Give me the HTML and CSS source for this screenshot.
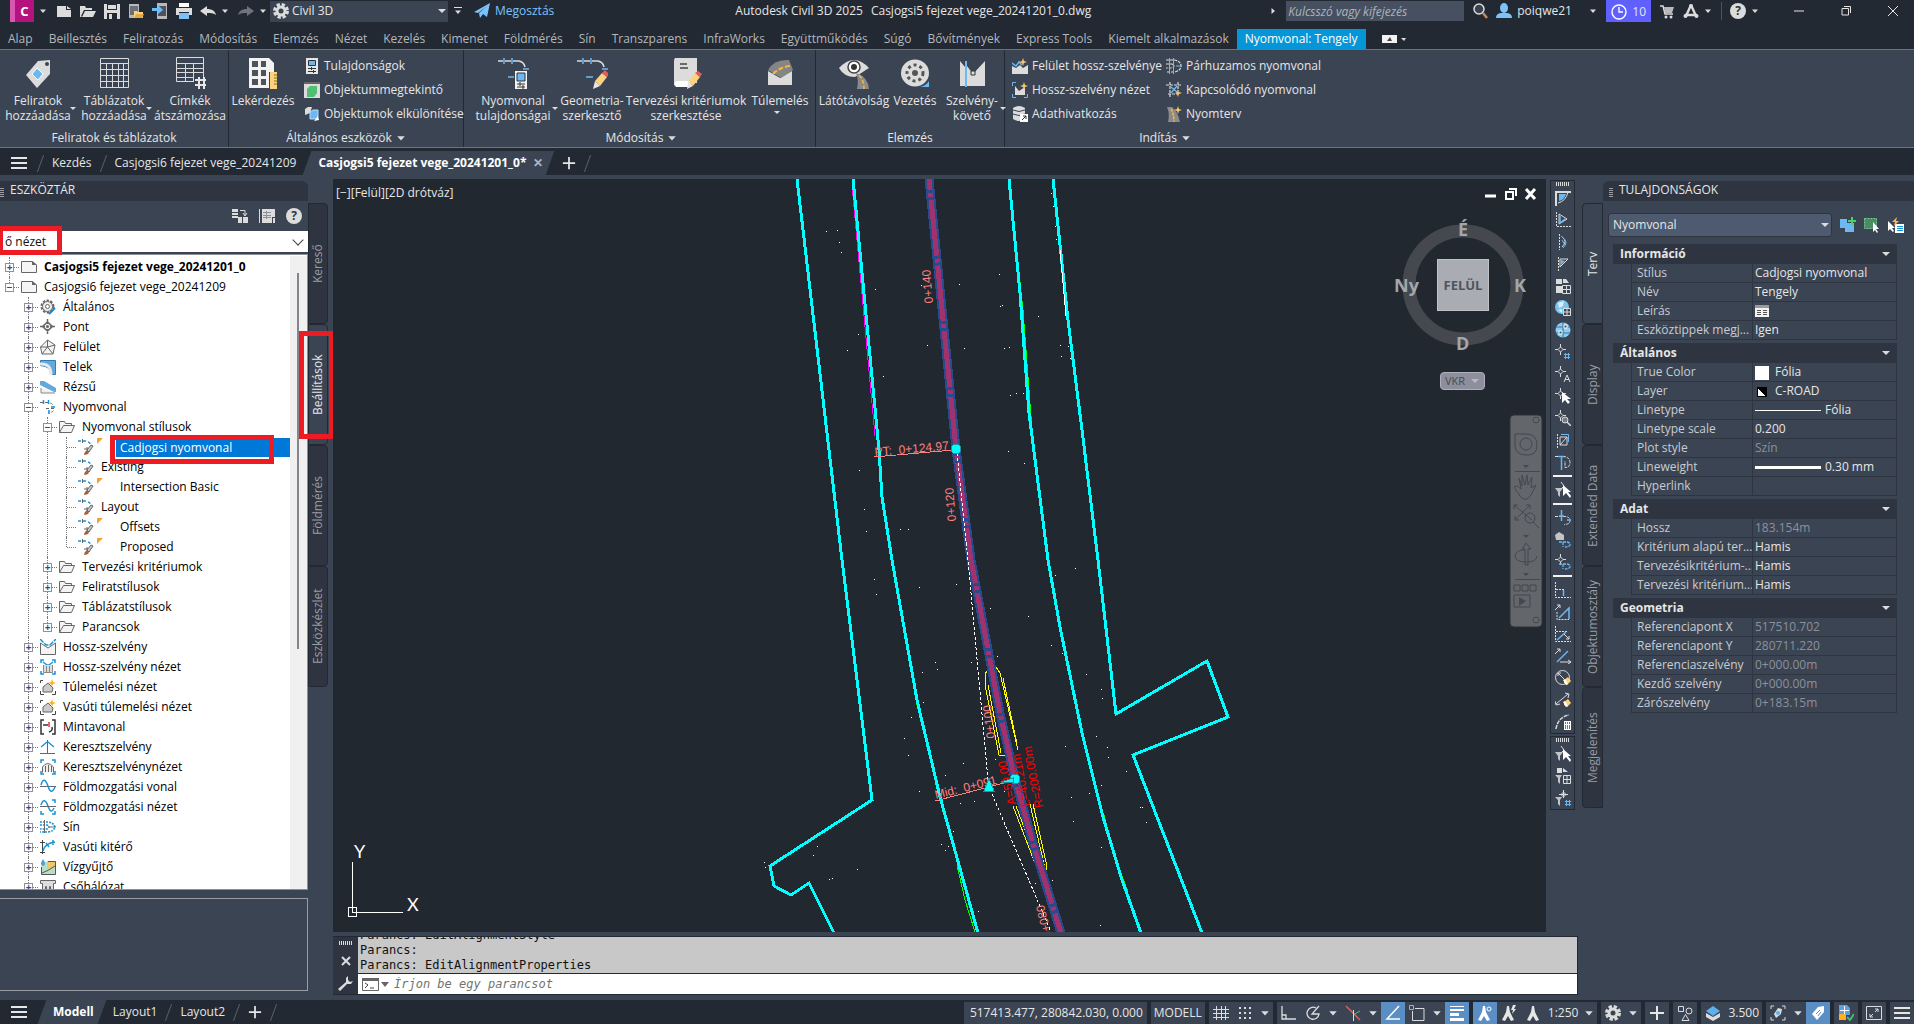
FILE: index.html
```html
<!DOCTYPE html>
<html lang="hu">

<head>
    <meta charset="utf-8">
    <title>Autodesk Civil 3D 2025</title>
    <link rel="stylesheet" href="styles.css">
</head>

<body>
    <!-- icon library -->
    <svg class="lib">
        <symbol id="new" viewBox="0 0 16 16"><path fill="#dcdcdc" d="M1 3h9v4h5v7H1zM11 3l4 3h-4z"/></symbol>
        <symbol id="open" viewBox="0 0 16 16"><path fill="#dcdcdc" d="M0 14V3h5l1 2h6v2H4l-3 6 1 1zM5 8h11l-3 6H2z"/></symbol>
        <symbol id="save" viewBox="0 0 16 16"><path fill="#dcdcdc" d="M0 1h16v15H0z"/><path fill="#222933" d="M3 1h10v6H3zM3 10h10v6H3z"/><path fill="#dcdcdc" d="M4 2h8v4H4zM5 11h3v5H5z"/></symbol>
        <symbol id="openweb" viewBox="0 0 16 16"><path fill="#b9b9b9" d="M1 1h10v14H1z"/><path fill="#6b7078" d="M2 3h8v9H2z"/><path fill="#fcd27e" d="M6 15V8h3l1 1h5v6z"/><path fill="#e3a94b" d="M6 15l2-4h8l-2 4z"/></symbol>
        <symbol id="saveweb" viewBox="0 0 16 16"><path fill="#b9b9b9" d="M5 0h10v16H5z"/><path fill="#4b535f" d="M6 3h8v10H6z"/><path fill="#6cbcf5" d="M0 5h6V2l5 5-5 4V8H0z"/></symbol>
        <symbol id="print" viewBox="0 0 16 16"><path fill="#fff" d="M3 0h10v4H3z"/><path fill="#dcdcdc" d="M0 5h16v7h-3V9H3v3H0z"/><path fill="#7cc0f7" d="M3 10h10v6H3z"/></symbol>
        <symbol id="undo" viewBox="0 0 16 16"><path fill="#dcdcdc" d="M0 8l7-5v3c5 0 8 2 9 6-3-2-5-2-9-2v3z"/></symbol>
        <symbol id="redo" viewBox="0 0 16 16"><path fill="#6f747c" d="M16 8L9 3v3c-5 0-8 2-9 6 3-2 5-2 9-2v3z"/></symbol>
        <symbol id="gear" viewBox="0 0 16 16"><circle cx="8" cy="8" r="6" fill="none" stroke="#dcdcdc" stroke-width="4" stroke-dasharray="3 1.7"/><circle cx="8" cy="8" r="4" fill="none" stroke="#dcdcdc" stroke-width="3"/></symbol>
        <symbol id="plane" viewBox="0 0 16 16"><path fill="#7cc3fa" d="M0 9L16 0l-3 14-4-3-3 4-1-5 8-7-9 7z"/></symbol>
        <symbol id="car" viewBox="0 0 8 8"><path fill="#dcdcdc" d="M1 2.500h6L4 6z"/></symbol>
        <symbol id="find" viewBox="0 0 16 16"><circle cx="7" cy="6" r="5" fill="#39424f" stroke="#dcdcdc" stroke-width="1.500"/><path stroke="#c08a5a" stroke-width="2.500" d="M11 10l4 5"/></symbol>
        <symbol id="user" viewBox="0 0 16 16"><ellipse cx="8" cy="5" rx="4" ry="5" fill="#7cc3fa"/><path fill="#7cc3fa" d="M0 15c0-4 3-5 6-5h4c3 0 6 1 6 5z"/></symbol>
        <symbol id="clock" viewBox="0 0 16 16"><circle cx="8" cy="8" r="7" fill="none" stroke="#fff" stroke-width="1.400"/><path fill="none" stroke="#fff" stroke-width="1.400" d="M8 3v5h4"/></symbol>
        <symbol id="cart" viewBox="0 0 16 16"><path fill="none" stroke="#dcdcdc" stroke-width="1.500" d="M1 3h3l2 8h8"/><path fill="#b9b9b9" d="M5 4h10l-2 6H6z"/><circle cx="7" cy="14" r="1.500" fill="#dcdcdc"/><circle cx="12" cy="14" r="1.500" fill="#dcdcdc"/></symbol>
        <symbol id="adesk" viewBox="0 0 16 16"><path fill="none" stroke="#dcdcdc" stroke-width="2.400" d="M8 2L3 13M8 2l5 11M2 12h12"/><circle cx="8" cy="3" r="2" fill="#dcdcdc"/><circle cx="2.500" cy="13" r="2" fill="#dcdcdc"/><circle cx="13.500" cy="13" r="2" fill="#dcdcdc"/></symbol>
        <symbol id="ham" viewBox="0 0 16 16"><path fill="#e6e6e6" d="M0 2h16v2H0zM0 7h16v2H0zM0 12h16v2H0z"/></symbol>
        <symbol id="plus" viewBox="0 0 16 16"><path fill="#e6e6e6" d="M7 1h2v14H7zM1 7h14v2H1z"/></symbol>
        <!-- ribbon, large -->
        <symbol id="tag" viewBox="0 0 32 32"><path fill="#dcdcdc" d="M16 4l12-1v14L15 31 4 18z"/><circle cx="25" cy="7" r="2" fill="#3b4453"/><path fill="#6cb8f5" stroke="#fff" d="M15 11l6 6-5 6-6-6z"/></symbol>
        <symbol id="grid" viewBox="0 0 32 32"><path fill="none" stroke="#dcdcdc" d="M2.500 1.500h28v29h-28zM2 6.500h28M2 12.500h28M2 18.500h28M2 24.500h28M8.500 7v23M14.500 7v23M20.500 7v23M25.500 7v23"/></symbol>
        <symbol id="renum" viewBox="0 0 32 32"><path fill="none" stroke="#dcdcdc" d="M2.500 20V.500h27V20M2 6.500h27M2 11.500h27M2 15.500h27M2 20.500h18M2.500 20v4.500H20M11.500 7v17M19.500 7v17"/><path fill="none" stroke="#e6e6e6" stroke-width="2" d="M25 20v12M30 20v12M21 23h13M21 28h13"/></symbol>
        <symbol id="query" viewBox="0 0 32 32"><path fill="#f2f2f2" d="M2 1h20l5 5v9h-5v16H2z"/><path fill="#4e535b" d="M5 4h6v6H5zM14 4h5v6h-5zM5 13h6v6H5zM14 13h5v6h-5zM5 22h6v6H5zM14 22h5v6h-5z"/><path fill="#fcd27e" d="M23 15h7v17h-7z"/><path stroke="#8a6a20" d="M27 18h3M27 21h3M27 24h3M27 27h3"/></symbol>
        <symbol id="align" viewBox="0 0 32 32"><path fill="none" stroke="#dcdcdc" stroke-width="1.500" d="M1 4h5M8 4h6M16 4h6q5 1 6 6"/><path stroke="#6cb8f5" stroke-width="1.500" d="M7 1v6M15 1v6M26 12h6M11 20h6"/><path fill="#f2f2f2" d="M18 14h12v18H18z"/><path fill="#6cb8f5" stroke="#333" d="M20 16h8v8h-8z"/><path stroke="#333" d="M20 27h8M20 30h8M23 25v4M26 28v4"/></symbol>
        <symbol id="geom" viewBox="0 0 32 32"><path fill="none" stroke="#dcdcdc" stroke-width="1.500" d="M1 4h5M8 4h6M16 4h6q5 1 6 6"/><path stroke="#6cb8f5" stroke-width="1.500" d="M7 1v6M15 1v6M26 12h6M10 20h7"/><path fill="#fcd27e" d="M19 24l7-8 5 4-7 9z"/><path fill="#e85b5b" d="M26 16l3-3 4 4-2 3z"/><path fill="#e6e6e6" d="M19 24l5 5-7 3z"/></symbol>
        <symbol id="crit" viewBox="0 0 32 32"><path fill="#dcdcdc" d="M5 1h22v25H10q-6 0-6 4V4q0-2 1-3z"/><path fill="#fff" d="M6 24h15v6H6q-3-3 0-6z"/><path stroke="#444" stroke-width="1.500" d="M10 7h7M10 11h8"/><path fill="#fcd27e" d="M18 25l7-9 5 4-7 9z"/><path fill="#e85b5b" d="M25 16l3-2 4 3-2 3z"/><path fill="#e6e6e6" d="M18 25l5 4-6 3z"/></symbol>
        <symbol id="super" viewBox="0 0 32 32"><path fill="#dcdcdc" d="M4 14l12 7 12-7v14H4z"/><path fill="#858585" d="M4 13Q10 2 25 3l4 10-12 8z"/><path fill="none" stroke="#f8b73c" stroke-width="2" stroke-dasharray="5 2" d="M9 17Q17 9 28 9"/></symbol>
        <symbol id="sight" viewBox="0 0 32 32"><path fill="#dcdcdc" d="M1 11Q16-5 31 11L17 20Q6 20 1 11z"/><circle cx="16" cy="10" r="6" fill="#fff" stroke="#444" stroke-width="1.500"/><circle cx="16" cy="10" r="3" fill="#333"/><path fill="#8b8b8b" d="M18 16q12 4 13 16H19q2-9-1-16z"/><path fill="none" stroke="#f8b73c" stroke-width="1.500" stroke-dasharray="4 2" d="M21 18q5 5 5 14"/></symbol>
        <symbol id="drive" viewBox="0 0 32 32"><ellipse cx="16" cy="16" rx="14" ry="13.500" fill="#dcdcdc"/><circle cx="16" cy="16" r="8" fill="none" stroke="#555" stroke-width="3" stroke-dasharray="3 3"/><circle cx="16" cy="16" r="3" fill="#555"/><path fill="#6cb8f5" d="M21 30q6-1 9-6v6z"/></symbol>
        <symbol id="sect" viewBox="0 0 32 32"><path fill="#dcdcdc" d="M4 4l5 6v19H4zM11 9l6 8 12-13v25H11z"/><path stroke="#6cb8f5" stroke-width="2" d="M10 4v26"/><path fill="#dcdcdc" stroke="#333" d="M15 14h4v4h-4z"/></symbol>
        <!-- ribbon, small -->
        <symbol id="props" viewBox="0 0 16 16"><path fill="#e6e6e6" d="M2 0h12v16H2z"/><path fill="#6cb8f5" stroke="#333" d="M4.500 2.500h7v5h-7z"/><path stroke="#333" d="M4 10.500h8M4 13.500h8M7.500 9v3M9.500 12v3"/></symbol>
        <symbol id="viewer" viewBox="0 0 16 16"><path fill="#dcdcdc" d="M0 0h16v16H0z"/><path fill="#666" d="M0 0h16v2H0z"/><path fill="#4fbf72" d="M3 7l3-3h7v7l-3 4H3z"/></symbol>
        <symbol id="isolate" viewBox="0 0 16 16"><path fill="#dcdcdc" d="M1 3l3-2h4L6 7 1 9z"/><path fill="#6cb8f5" stroke="#b8defa" d="M6 6l3-2h5v7l-2 2H6z"/><path fill="#fff" d="M10 15l4-5 1 4z"/></symbol>
        <symbol id="surfp" viewBox="0 0 16 16"><path fill="#dcdcdc" d="M0 8l4 2 4-3 3 3 5-3v9H0z"/><path fill="none" stroke="#6cb8f5" stroke-width="1.500" d="M0 5l4 3 3-4 3 3"/><path fill="#fcc36a" d="M11 0l1 3 3 1-3 1-1 3-1-3-3-1 3-1z"/></symbol>
        <symbol id="profv" viewBox="0 0 16 16"><path fill="none" stroke="#6cb8f5" d="M.500 4V.500H4M.500 12v3.500H4M12 15.500h3.500V12"/><path fill="#dcdcdc" d="M3 4l4 5 6-4v8H3z"/><path fill="#fcc36a" d="M12 0l1 3 3 1-3 1-1 3-1-3-3-1 3-1z"/></symbol>
        <symbol id="data" viewBox="0 0 16 16"><path fill="#dcdcdc" d="M1 2q6-4 12 0v11q-6 4-12 0z"/><path fill="none" stroke="#3b4453" d="M1 4q6 3 12 0M1 8q6 3 12 0"/><path fill="#fff" d="M8 8h8v8H8z"/><path fill="none" stroke="#333" d="M10 14l4-4M11 10h3v3"/></symbol>
        <symbol id="offs" viewBox="0 0 16 16"><path fill="none" stroke="#dcdcdc" stroke-width="1.200" stroke-dasharray="3 1" d="M0 2h8q7 1 7 6t-7 6H0M0 6h6q4 2 0 4H0"/><path stroke="#6cb8f5" d="M3.500 0v16M7.500 0v16M10 8h6"/></symbol>
        <symbol id="conn" viewBox="0 0 16 16"><path fill="none" stroke="#dcdcdc" stroke-width="1.200" stroke-dasharray="3 1" d="M0 3h15M4 0v16M2 12h9M12 0v9"/><path fill="none" stroke="#6cb8f5" stroke-width="1.300" d="M5 5l6 5M11 4l-6 7"/><path fill="#fcc36a" d="M12 8l1 2 3 1-3 1-1 3-1-3-2-1 2-1z"/></symbol>
        <symbol id="corr" viewBox="0 0 16 16"><path fill="#8b8b8b" d="M1 1h5q6 5 8 15H2q2-8-1-15z"/><path fill="none" stroke="#f8b73c" stroke-width="1.500" stroke-dasharray="3 1" d="M5 3q3 5 3 13"/><path fill="#fcc36a" d="M12 0l1 3 3 1-3 1-1 3-1-3-3-1 3-1z"/></symbol>
        <!-- toolspace tree -->
        <symbol id="dwg" viewBox="0 0 16 16"><path fill="#f5f5f5" stroke="#666" d="M.500 2.500h11l4 3.500v7.500H.500z"/><path fill="#666" d="M11 2v4h5z"/></symbol>
        <symbol id="tgear" viewBox="0 0 16 16"><circle cx="7.500" cy="7.500" r="6" fill="none" stroke="#666" stroke-width="2" stroke-dasharray="2.400 1.400"/><circle cx="7.500" cy="7.500" r="5" fill="#eee" stroke="#666"/><circle cx="7.500" cy="7.500" r="2" fill="#fff" stroke="#666"/><path stroke="#0f8fd8" stroke-width="2" d="M9 15l6-6"/></symbol>
        <symbol id="tpt" viewBox="0 0 16 16"><path stroke="#666" stroke-width="1.500" fill="#eee" d="M7.500 3l5 4.500-5 4.500-5-4.500zM7.500 0v5M7.500 10v5M0 7.500h5M10 7.500h5"/><circle cx="7.500" cy="7.500" r="1.500" fill="#666"/></symbol>
        <symbol id="tsurf" viewBox="0 0 16 16"><path fill="#f4f4f4" stroke="#666" d="M7.500 1L15 6l-2 9H2L.500 8zM7.500 1v7L.500 8M7.500 8L15 6M7.500 8l5.500 7M7.500 8L2 15"/></symbol>
        <symbol id="tparc" viewBox="0 0 16 16"><path fill="#63a9dc" stroke="#2e7cb8" d="M.500 1.500h15v14h-5q1-8-10-9z"/><path fill="none" stroke="#e8e8e8" stroke-width="3" d="M0 5q11-1 11 11"/></symbol>
        <symbol id="tgrad" viewBox="0 0 16 16"><path fill="#eee" stroke="#888" d="M1 9v5h14"/><path fill="#63a9dc" d="M0 2h4l12 7v4h-2L0 6z"/></symbol>
        <symbol id="tal" viewBox="0 0 16 16"><path fill="none" stroke="#666" stroke-dasharray="3 2" d="M0 3.500h8q6 1 5 4.500M6 9.500h8q0 4-6 4"/><path stroke="#1793d6" stroke-width="1.500" d="M3.500 1v4M8.500 1v4M11 8h4M9 11v4"/></symbol>
        <symbol id="fold" viewBox="0 0 16 16"><path fill="#f4f4f4" stroke="#666" d="M.500 13.500v-11h5l1 2h6v2M.500 13.500l4-7h11l-3 7z"/></symbol>
        <symbol id="tsty" viewBox="0 0 16 16"><path fill="none" stroke="#1793d6" stroke-width="1.300" stroke-dasharray="3 2" d="M0 2h7q6 1 7 6"/><path stroke="#666" d="M4.500 0v4M6 10h4M9 8v4"/><path fill="#c9c9c9" stroke="#666" d="M9 11l4-5 2 1-4 6z"/><path fill="#a5603a" d="M6 16q1-5 4-4 3 3-4 4z"/></symbol>
        <symbol id="flag" viewBox="0 0 6 6"><path fill="#f5a13a" d="M0 0h6L0 6z"/></symbol>
        <symbol id="tprof" viewBox="0 0 16 16"><path fill="#f4f4f4" stroke="#666" d="M.500 4v11.500h15V4L8 9z"/><path fill="none" stroke="#1793d6" stroke-width="1.500" stroke-dasharray="5 1" d="M0 0l6 6h4l6-6"/></symbol>
        <symbol id="tpv" viewBox="0 0 16 16"><path fill="none" stroke="#1793d6" stroke-width="1.500" d="M1 4V1h3M12 1h3v3M1 12v3h3M12 15h3v-3M3 3l4 3h2l4-3"/><path fill="#ddd" stroke="#888" d="M3.500 6v7.500h9V6M6.500 7v6M9.500 7v6"/></symbol>
        <symbol id="tsup" viewBox="0 0 16 16"><path fill="none" stroke="#444" d="M.500 4V1.500H3M.500 12v3.500H4M12 15.500h3.500V12"/><path fill="#ccc" stroke="#666" d="M3 8l5-4 5 5-1 4H3z"/><path fill="#fdb022" d="M12 0l1 3 3 1-3 1-1 3-1-3-3-1 3-1z"/></symbol>
        <symbol id="tsamp" viewBox="0 0 16 16"><path fill="none" stroke="#333" stroke-width="1.500" d="M4 1H1v14h3M12 1h3v14h-3M3 6h5M9 13q4-1 3-5"/><path stroke="#d33" stroke-width="1.500" d="M9 3v5"/></symbol>
        <symbol id="tsec" viewBox="0 0 16 16"><path fill="none" stroke="#666" d="M7.500 1v14M0 14.500h15"/><path fill="none" stroke="#1793d6" stroke-width="1.300" d="M1 8l6-5M8 3l6 5"/></symbol>
        <symbol id="tsv" viewBox="0 0 16 16"><path fill="none" stroke="#1793d6" stroke-width="1.500" d="M1 4V1h3M12 1h3v3M1 12v3h3M12 15h3v-3"/><path fill="#eee" stroke="#666" d="M2.500 13.500V8q5-7 11 0v5.500M5.500 7v6M8.500 6v7M11.500 7v6"/></symbol>
        <symbol id="tmass" viewBox="0 0 16 16"><path stroke="#666" d="M0 7.500h16"/><path fill="none" stroke="#1793d6" stroke-width="1.500" d="M1 6q3-10 7 1 3 10 7 1"/></symbol>
        <symbol id="tmv" viewBox="0 0 16 16"><path fill="none" stroke="#1793d6" stroke-width="1.500" d="M12 1h3v3M1 12v3h3M12 15h3v-3M1 6q3-9 7 1 3 9 6 2"/><path stroke="#666" d="M0 7.500h16"/></symbol>
        <symbol id="trail" viewBox="0 0 16 16"><path fill="none" stroke="#1793d6" stroke-width="1.500" stroke-dasharray="2 1" d="M0 3h8q6 1 7 5-1 4-7 5H0M0 6h7q4 2 0 4H0"/><path stroke="#666" d="M4.500 1v13M8 8h8"/></symbol>
        <symbol id="tturn" viewBox="0 0 16 16"><path stroke="#444" d="M2.500 1v14M0 3.500h5M0 13.500h5"/><path fill="none" stroke="#1793d6" stroke-width="1.500" d="M3 12q2-8 12-9M6 4l3 4M13 1v5"/></symbol>
        <symbol id="tcatch" viewBox="0 0 16 16"><path fill="#b8dfc4" d="M4 3h12v12H1V8z"/><path fill="#f2c66b" d="M7 2h9v5l-9 4z"/><path fill="#4ba0dc" d="M3 0q4 6 0 7-4-1 0-7z"/><path fill="none" stroke="#555" d="M1.500 8v7.500h14v-13H8M2 14q6-2 13-7"/></symbol>
        <symbol id="tpipe" viewBox="0 0 16 16"><path fill="#ddd" stroke="#666" d="M.500 1.500h15v3h-2v11h-3v-8h-1v8h-3v-8h-1v8h-3v-11h-2z"/></symbol>
        <!-- side toolbar -->
        <symbol id="s1" viewBox="0 0 16 16"><path fill="none" stroke="#dcdcdc" stroke-width="2" d="M1 16V2h15"/><path fill="none" stroke="#dcdcdc" d="M13 2q-2 9-10 11"/><path fill="#6cb8f5" d="M4 4h7q-2 6-7 7z"/></symbol>
        <symbol id="s2" viewBox="0 0 16 16"><path fill="none" stroke="#dcdcdc" stroke-dasharray="2 1" d="M1.500 0v14.500H16"/><path fill="none" stroke="#dcdcdc" d="M4 2l8 5-8 5z"/><path fill="none" stroke="#6cb8f5" stroke-width="1.500" d="M5 4v7l5-4"/></symbol>
        <symbol id="s3" viewBox="0 0 16 16"><path stroke="#dcdcdc" stroke-dasharray="2 1" d="M4.500 0v16"/><path fill="none" stroke="#dcdcdc" d="M7 3q6 4 0 10"/><path fill="none" stroke="#6cb8f5" d="M6 2q9 6 2 12M7 6l3 5"/></symbol>
        <symbol id="s4" viewBox="0 0 16 16"><path stroke="#dcdcdc" stroke-dasharray="2 1" d="M3.500 1v15"/><path fill="none" stroke="#dcdcdc" d="M5 3h8l-8 8z"/><path fill="#6cb8f5" d="M6 4l4 1-4 4z"/></symbol>
        <symbol id="s5" viewBox="0 0 16 16"><path fill="#dcdcdc" d="M1 1h6v5H1zM8 1h3l3 4H8zM1 8h6v7H1z"/><path fill="#3b4453" stroke="#dcdcdc" d="M7.500 7.500h8v8h-8zM11.500 8v7M8 11.500h7"/></symbol>
        <symbol id="s6" viewBox="0 0 16 16"><circle cx="7" cy="7" r="7" fill="#7cc3ee"/><path fill="#d8eefa" d="M3 3l6-2-1 5-4 2zM3 10l4-1v4z"/><path fill="#3b4453" stroke="#dcdcdc" d="M8.500 8.500h7v7h-7zM12 9v6M9 12h6"/></symbol>
        <symbol id="s7" viewBox="0 0 16 16"><circle cx="8" cy="8" r="7.500" fill="#8ecdf2"/><path fill="none" stroke="#35749f" d="M8 0v16M1 5h14M1 11h14"/><path fill="#3b4453" stroke="#fff" d="M9 3h3v3H9zM4 9h3v3H4z"/></symbol>
        <symbol id="cross" viewBox="0 0 16 16"><path fill="none" stroke="#dcdcdc" d="M5.500 0v3M5.500 8v3M0 5.500h3M8 5.500h3M5.500 3L8 5.500 5.500 8 3 5.500z"/></symbol>
        <symbol id="s8" viewBox="0 0 16 16"><use href="#cross"/><path stroke="#6cb8f5" d="M10.500 9v6M13.500 9v6M9 10.500h6M9 13.500h6"/></symbol>
        <symbol id="s9" viewBox="0 0 16 16"><use href="#cross"/><path fill="none" stroke="#dcdcdc" d="M9 16l3-7 3 7M10 13.500h4"/></symbol>
        <symbol id="s10" viewBox="0 0 16 16"><use href="#cross"/><path fill="#fff" d="M7 4v11l3-3 3 4 2-2-3-3h4z"/></symbol>
        <symbol id="s11" viewBox="0 0 16 16"><use href="#cross"/><circle cx="10" cy="10" r="3" fill="#777d87" stroke="#dcdcdc"/><path stroke="#dcdcdc" stroke-width="1.500" d="M12 12l4 4"/></symbol>
        <symbol id="s12" viewBox="0 0 16 16"><path stroke="#dcdcdc" stroke-dasharray="2 1" d="M2.500 2v14"/><path fill="none" stroke="#dcdcdc" d="M5 5h7v8H5zM5 13l7-8"/><path fill="none" stroke="#6cb8f5" d="M6 2.500h7.500V10"/></symbol>
        <symbol id="s13" viewBox="0 0 16 16"><path fill="none" stroke="#dcdcdc" stroke-dasharray="3 1" d="M0 2.500h9q6 1 6 6t-5 5V7"/><path stroke="#6cb8f5" stroke-width="1.500" d="M3 2.500h6M6.500 3v13"/></symbol>
        <symbol id="s14" viewBox="0 0 16 16"><path fill="#c4c4c4" d="M0 6h8l-3 4v5l-2-2v-3z"/><path fill="none" stroke="#dcdcdc" d="M6 0l3 4-3 3"/><path fill="#fff" d="M8 3v11l3-3 4 5 1-2-3-4h3z"/></symbol>
        <symbol id="s15" viewBox="0 0 16 16"><path fill="none" stroke="#dcdcdc" stroke-dasharray="3 1" d="M0 6.500h9q6 0 6 4t-6 4"/><path stroke="#6cb8f5" stroke-width="1.500" d="M6.500 0v11M4 6h5M12 10h4"/></symbol>
        <symbol id="s16" viewBox="0 0 16 16"><path fill="#c4c4c4" d="M4 0l5 3v5H1L0 3z"/><path fill="none" stroke="#6cb8f5" stroke-width="1.300" stroke-dasharray="3 1" d="M4 10h8q4 1 3 3t-5 2M8 10v5"/></symbol>
        <symbol id="s17" viewBox="0 0 16 16"><use href="#cross"/><path fill="none" stroke="#6cb8f5" stroke-width="1.300" stroke-dasharray="3 1" d="M4 10h8q4 1 3 3t-5 2M8 10v5"/></symbol>
        <symbol id="s18" viewBox="0 0 16 16"><path fill="none" stroke="#dcdcdc" stroke-dasharray="2 1" d="M.500 0v15.500H16M1 7.500h8"/><path stroke="#6cb8f5" stroke-width="1.500" d="M8.500 8v6"/></symbol>
        <symbol id="s19" viewBox="0 0 16 16"><path fill="none" stroke="#dcdcdc" d="M0 6l5-5M2 1h3v3"/><path fill="none" stroke="#dcdcdc" stroke-dasharray="2 1" d="M2 8v7.500h12"/><path fill="none" stroke="#6cb8f5" stroke-width="1.500" d="M4 14l10-10v11"/></symbol>
        <symbol id="s20" viewBox="0 0 16 16"><path fill="none" stroke="#dcdcdc" stroke-dasharray="2 1" d="M.500 0v15.500H16M1 5.500h11"/><path stroke="#6cb8f5" stroke-width="1.500" d="M2 14l9-8"/><path fill="none" stroke="#dcdcdc" d="M9 8l5 5M14 10v3h-3"/></symbol>
        <symbol id="s21" viewBox="0 0 16 16"><path fill="none" stroke="#dcdcdc" d="M0 6l5-5M2 1h3v3M5 14h11M13 12l3 2-3 2"/><path stroke="#6cb8f5" stroke-width="1.500" d="M2 14L13 3"/></symbol>
        <symbol id="s22" viewBox="0 0 16 16"><circle cx="7.500" cy="7.500" r="7" fill="none" stroke="#dcdcdc"/><path stroke="#dcdcdc" fill="none" d="M3 3l6 6M3 6V3h3"/><path fill="#fcd27e" d="M9 10l4-3 3 4-4 4-3-2z"/><path fill="#fff" d="M8 10l2-1 3 5-2 1z"/></symbol>
        <symbol id="s23" viewBox="0 0 16 16"><path stroke="#dcdcdc" fill="none" d="M1 12L13 2M10 1l4 1-1 4M0 9l1 4 4-1"/><path fill="#fcd27e" d="M9 10l4-3 3 4-4 4-3-2z"/><path fill="#fff" d="M8 10l2-1 3 5-2 1z"/></symbol>
        <symbol id="s24" viewBox="0 0 16 16"><path fill="none" stroke="#dcdcdc" stroke-width="1.500" stroke-dasharray="4 1" d="M1 15Q3 3 14 1"/><path fill="#fff" d="M9 7h7v9H9z"/><path stroke="#1793d6" stroke-width="2" stroke-dasharray="1 1" d="M10 9h5M10 12h5M10 14h5"/></symbol>
        <symbol id="s25" viewBox="0 0 16 16"><path fill="#c4c4c4" d="M0 7h7l-2 3v6l-2-2v-4z"/><path fill="#dcdcdc" d="M2 0h5v5H2zM8 0l5 4H8z"/><path fill="#3b4453" stroke="#dcdcdc" d="M8.500 7.500h7v8h-7zM12 8v7M9 11.500h6"/></symbol>
        <symbol id="s26" viewBox="0 0 16 16"><path fill="#c4c4c4" d="M0 7h7l-2 3v6l-2-2v-4z"/><path fill="none" stroke="#dcdcdc" d="M8.500 0v8M4 4.500h9M8.500 2L11 4.500 8.500 7 6 4.500z"/><path stroke="#6cb8f5" d="M11.500 10v6M14.500 10v6M10 11.500h6M10 14.500h6"/></symbol>
        <!-- status bar -->
        <symbol id="b-grid" viewBox="0 0 16 16"><path stroke="#dcdcdc" d="M3.500 1v14M8.500 1v14M12.500 1v14M0 4.500h16M0 8.500h16M0 12.500h16"/></symbol>
        <symbol id="b-snap" viewBox="0 0 16 16"><path stroke="#dcdcdc" stroke-width="2" stroke-dasharray="2 3" d="M2 3h13M2 8h13M2 13h13"/></symbol>
        <symbol id="b-ortho" viewBox="0 0 16 16"><path fill="none" stroke="#dcdcdc" stroke-width="1.300" d="M1 1v13h14M1 10h4v4"/></symbol>
        <symbol id="b-polar" viewBox="0 0 16 16"><path fill="none" stroke="#dcdcdc" stroke-width="1.300" d="M11 3a6 6 0 1 0 3 6H7l7-8"/></symbol>
        <symbol id="b-iso" viewBox="0 0 16 16"><path stroke="#e05a5a" stroke-width="1.500" d="M1 1l14 14"/><path stroke="#5cb878" d="M15 6L8 10"/><path stroke="#dcdcdc" d="M8.500 5v11"/></symbol>
        <symbol id="b-track" viewBox="0 0 16 16"><path fill="none" stroke="#fff" stroke-width="1.500" d="M14 1L2 14h13"/></symbol>
        <symbol id="b-osnap" viewBox="0 0 16 16"><path fill="none" stroke="#dcdcdc" d="M6 3.500h9v12H3.500V6"/><path fill="none" stroke="#f0a04b" d="M.500.500h4v4h-4z"/></symbol>
        <symbol id="b-lw" viewBox="0 0 16 16"><path fill="#fff" d="M1 1h14v1H1zM1 4h14v2H1zM1 8h9v3H1zM1 13h14v3H1z"/></symbol>
        <symbol id="b-ann" viewBox="0 0 16 16"><path fill="#e6e6e6" d="M7 1h2l1 6 4 8-3 1-3-5-3 5-3-1 4-8z"/></symbol>
        <symbol id="b-ann2" viewBox="0 0 16 16"><path fill="#fff" d="M6 1h2l1 6 4 8-3 1-3-5-3 5-3-1 4-8z"/><circle cx="12" cy="4" r="2" fill="none" stroke="#fff"/></symbol>
        <symbol id="b-ann3" viewBox="0 0 16 16"><path fill="#e6e6e6" d="M6 1h2l1 6 4 8-3 1-3-5-3 5-3-1 4-8z"/><path fill="#e6e6e6" d="M12 0l-2 5h2l-1 4 4-5h-2l2-4z"/></symbol>
        <symbol id="b-shape" viewBox="0 0 16 16"><path fill="none" stroke="#dcdcdc" d="M1.500 1.500h5v5h-5zM5 15.500l3.500-6 3.500 6z"/><circle cx="12" cy="6" r="3" fill="none" stroke="#dcdcdc"/></symbol>
        <symbol id="b-layer" viewBox="0 0 16 16"><path fill="#dcdcdc" d="M1 8l7 4 7-4v4l-7 4-7-4z"/><path fill="#5cb0ee" d="M1 6l7-5 7 5-7 5z"/></symbol>
        <symbol id="b-sel" viewBox="0 0 16 16"><path fill="none" stroke="#dcdcdc" d="M1 4V1h3M12 1h3v3M1 12v3h3M12 15h3v-3"/><path fill="#dcdcdc" d="M4 9l4-6 4 1-1 5-5 4z"/><circle cx="8" cy="8" r="2" fill="#5cb0ee"/></symbol>
        <symbol id="b-tag" viewBox="0 0 16 16"><path fill="#fff" d="M2 9l6-7 6-1v6l-7 8z"/><path stroke="#5b8ec4" d="M6 9l4-4M8 11l3-4"/></symbol>
        <symbol id="b-iso2" viewBox="0 0 16 16"><path fill="#5b9fe0" d="M1 0h8l3 3v7H1z"/><path stroke="#fff" d="M6.500 1v9M2 5.500h9"/><path fill="#fdb022" d="M1 9h7v6H1z"/><path fill="none" stroke="#3fbf6a" stroke-width="2" d="M9 12l3 3 4-6"/></symbol>
        <symbol id="b-full" viewBox="0 0 16 16"><path fill="none" stroke="#dcdcdc" d="M.500 1.500h15v13H.500zM9 7l3-3M9 4h3v3M7 9l-3 3M4 9v3h3"/></symbol>
        <symbol id="wrench" viewBox="0 0 16 16"><path fill="#dcdcdc" d="M10 5V1L8 3v4L0 14l2 2 7-7h4l2-3-3 1z"/></symbol>
    </svg>

    <header class="titlebar">
        <div class="quick">
            <button class="logo" aria-label="Civil 3D">C</button>
            <svg class="car"><use href="#car"/></svg>
            <button aria-label="Új"><svg><use href="#new"/></svg></button>
            <button aria-label="Megnyitás"><svg><use href="#open"/></svg></button>
            <button aria-label="Mentés"><svg><use href="#save"/></svg></button>
            <button aria-label="Megnyitás webről"><svg><use href="#openweb"/></svg></button>
            <button aria-label="Mentés webre"><svg><use href="#saveweb"/></svg></button>
            <button aria-label="Nyomtatás"><svg><use href="#print"/></svg></button>
            <button aria-label="Vissza"><svg><use href="#undo"/></svg></button>
            <svg class="car"><use href="#car"/></svg>
            <button aria-label="Újra"><svg><use href="#redo"/></svg></button>
            <svg class="car"><use href="#car"/></svg>
            <label class="workspace"><svg><use href="#gear"/></svg>
                <select aria-label="Munkaterület"><option>Civil 3D</option></select>
            </label>
            <button class="more" aria-label="Több"><svg class="car"><use href="#car"/></svg></button>
            <button class="share"><svg><use href="#plane"/></svg>Megosztás</button>
        </div>
        <div class="doctitle"><span>Autodesk Civil 3D 2025</span><span>Casjogsi5 fejezet vege_20241201_0.dwg</span></div>
        <div class="account">
            <svg class="car side"><use href="#car"/></svg>
            <input type="text" placeholder="Kulcsszó vagy kifejezés" aria-label="Keresés">
            <button aria-label="Keresés"><svg><use href="#find"/></svg></button>
            <button class="user"><svg><use href="#user"/></svg>poiqwe21</button>
            <svg class="car"><use href="#car"/></svg>
            <button class="trial"><svg><use href="#clock"/></svg>10</button>
            <button aria-label="Bolt"><svg><use href="#cart"/></svg></button>
            <button aria-label="Autodesk"><svg><use href="#adesk"/></svg></button>
            <svg class="car"><use href="#car"/></svg>
            <i class="sep"></i>
            <button class="help">?</button>
            <svg class="car"><use href="#car"/></svg>
        </div>
        <div class="window">
            <button aria-label="Kis méret"><svg viewBox="0 0 10 10"><path d="M0 5h10"/></svg></button>
            <button aria-label="Visszaállítás"><svg viewBox="0 0 10 10"><path d="M1 2.500h6.500V9H1zM3 .500h6.500V7"/></svg></button>
            <button aria-label="Bezárás"><svg viewBox="0 0 10 10"><path d="M0 0l10 10M10 0L0 10"/></svg></button>
        </div>
    </header>

    <nav class="tabs">
        <a href="#">Alap</a>
        <a href="#">Beillesztés</a>
        <a href="#">Feliratozás</a>
        <a href="#">Módosítás</a>
        <a href="#">Elemzés</a>
        <a href="#">Nézet</a>
        <a href="#">Kezelés</a>
        <a href="#">Kimenet</a>
        <a href="#">Földmérés</a>
        <a href="#">Sín</a>
        <a href="#">Transzparens</a>
        <a href="#">InfraWorks</a>
        <a href="#">Együttműködés</a>
        <a href="#">Súgó</a>
        <a href="#">Bővítmények</a>
        <a href="#">Express Tools</a>
        <a href="#">Kiemelt alkalmazások</a>
        <a href="#" class="on">Nyomvonal: Tengely</a>
        <button class="collapse" aria-label="Szalag összecsukása"><svg viewBox="0 0 28 10"><path fill="#f2f2f2" d="M0 1h15v8H0z"/><path fill="#444" d="M5 7l3-4 2 4z"/><path fill="#dcdcdc" d="M19 4h5l-2 3z"/></svg></button>
    </nav>

    <section class="ribbon">
        <div class="rpanel p1">
            <div class="tools">
                <button class="big w76 drop"><svg><use href="#tag"/></svg>Feliratok<br>hozzáadása</button>
                <button class="big w76 drop"><svg><use href="#grid"/></svg>Táblázatok<br>hozzáadása</button>
                <button class="big w76"><svg><use href="#renum"/></svg>Címkék<br>átszámozása</button>
            </div>
            <h3>Feliratok és táblázatok</h3>
        </div>
        <div class="rpanel p2">
            <div class="tools">
                <button class="big w68"><svg><use href="#query"/></svg>Lekérdezés</button>
                <div class="stack">
                    <button><svg><use href="#props"/></svg>Tulajdonságok</button>
                    <button><svg><use href="#viewer"/></svg>Objektummegtekintő</button>
                    <button><svg><use href="#isolate"/></svg>Objektumok elkülönítése</button>
                </div>
            </div>
            <h3>Általános eszközök <svg><use href="#car"/></svg></h3>
        </div>
        <div class="rpanel p3">
            <div class="tools">
                <button class="big w90 drop"><svg><use href="#align"/></svg>Nyomvonal<br>tulajdonságai</button>
                <button class="big w68"><svg><use href="#geom"/></svg>Geometria-<br>szerkesztő</button>
                <button class="big w120"><svg><use href="#crit"/></svg>Tervezési kritériumok<br>szerkesztése</button>
                <button class="big w68 below"><svg><use href="#super"/></svg>Túlemelés</button>
            </div>
            <h3>Módosítás <svg><use href="#car"/></svg></h3>
        </div>
        <div class="rpanel p4">
            <div class="tools">
                <button class="big w76"><svg><use href="#sight"/></svg>Látótávolság</button>
                <button class="big w46"><svg><use href="#drive"/></svg>Vezetés</button>
                <button class="big w68 drop"><svg><use href="#sect"/></svg>Szelvény-<br>követő</button>
            </div>
            <h3>Elemzés</h3>
        </div>
        <div class="rpanel p5">
            <div class="tools">
                <div class="stack">
                    <button><svg><use href="#surfp"/></svg>Felület hossz-szelvénye</button>
                    <button><svg><use href="#profv"/></svg>Hossz-szelvény nézet</button>
                    <button><svg><use href="#data"/></svg>Adathivatkozás</button>
                </div>
                <div class="stack">
                    <button><svg><use href="#offs"/></svg>Párhuzamos nyomvonal</button>
                    <button><svg><use href="#conn"/></svg>Kapcsolódó nyomvonal</button>
                    <button><svg><use href="#corr"/></svg>Nyomterv</button>
                </div>
            </div>
            <h3>Indítás <svg><use href="#car"/></svg></h3>
        </div>
    </section>

    <nav class="docs">
        <button aria-label="Menü"><svg><use href="#ham"/></svg></button>
        <i class="slash"></i>
        <a href="#">Kezdés</a>
        <i class="slash"></i>
        <a href="#">Casjogsi6 fejezet vege_20241209</a>
        <a href="#" class="on">Casjogsi5 fejezet vege_20241201_0* <span>✕</span></a>
        <button aria-label="Új lap"><svg class="add"><use href="#plus"/></svg></button>
        <i class="slash"></i>
    </nav>

    <main>
        <aside class="toolspace">
            <div class="panel">
                <h2>ESZKÖZTÁR</h2>
                <div class="ptools">
                    <button aria-label="Elemfa"><svg viewBox="0 0 16 16"><path fill="#dcdcdc" d="M0 1h6v3H0zM0 5h6v2H0zM0 8h6v2H0zM6 9h4v6H6zM11 9h5v6h-5z"/><path fill="none" stroke="#dcdcdc" d="M8 2.500h5v5M11 5l2 3 2-3"/></svg></button>
                    <button aria-label="Panoráma"><svg viewBox="0 0 16 16"><path fill="#dcdcdc" d="M0 1h1v14H0zM3 1h13v8h-3v6H3zM14 10h2v5h-2z"/><path stroke="#8a8f98" d="M4 4.500h8M4 7.500h8M4 9.500h8M7.500 3v8"/></svg></button>
                    <button class="help">?</button>
                </div>
                <div class="view">
                    <select aria-label="Nézet"><option>ő nézet</option></select>
                    <i class="mark"></i>
                </div>
                <div class="tree">
                    <ul>
                        <li><div class="row"><button>+</button><svg><use href="#dwg"/></svg><b>Casjogsi5 fejezet vege_20241201_0</b></div></li>
                        <li><div class="row"><button>−</button><svg><use href="#dwg"/></svg><span>Casjogsi6 fejezet vege_20241209</span></div>
                            <ul>
                                <li><div class="row"><button>+</button><svg><use href="#tgear"/></svg><span>Általános</span></div></li>
                                <li><div class="row"><button>+</button><svg><use href="#tpt"/></svg><span>Pont</span></div></li>
                                <li><div class="row"><button>+</button><svg><use href="#tsurf"/></svg><span>Felület</span></div></li>
                                <li><div class="row"><button>+</button><svg><use href="#tparc"/></svg><span>Telek</span></div></li>
                                <li><div class="row"><button>+</button><svg><use href="#tgrad"/></svg><span>Rézsű</span></div></li>
                                <li><div class="row"><button>−</button><svg><use href="#tal"/></svg><span>Nyomvonal</span></div>
                                    <ul>
                                        <li><div class="row"><button>−</button><svg><use href="#fold"/></svg><span>Nyomvonal stílusok</span></div>
                                            <ul>
                                                <li><div class="row leaf child"><svg><use href="#tsty"/></svg><svg class="flag"><use href="#flag"/></svg><span class="sel">Cadjogsi nyomvonal</span><i class="mark"></i></div></li>
                                                <li><div class="row leaf"><svg><use href="#tsty"/></svg><span>Existing</span></div></li>
                                                <li><div class="row leaf child"><svg><use href="#tsty"/></svg><svg class="flag"><use href="#flag"/></svg><span>Intersection Basic</span></div></li>
                                                <li><div class="row leaf"><svg><use href="#tsty"/></svg><span>Layout</span></div></li>
                                                <li><div class="row leaf child"><svg><use href="#tsty"/></svg><svg class="flag"><use href="#flag"/></svg><span>Offsets</span></div></li>
                                                <li><div class="row leaf child"><svg><use href="#tsty"/></svg><svg class="flag"><use href="#flag"/></svg><span>Proposed</span></div></li>
                                            </ul>
                                        </li>
                                        <li><div class="row"><button>+</button><svg><use href="#fold"/></svg><span>Tervezési kritériumok</span></div></li>
                                        <li><div class="row"><button>+</button><svg><use href="#fold"/></svg><span>Feliratstílusok</span></div></li>
                                        <li><div class="row"><button>+</button><svg><use href="#fold"/></svg><span>Táblázatstílusok</span></div></li>
                                        <li><div class="row"><button>+</button><svg><use href="#fold"/></svg><span>Parancsok</span></div></li>
                                    </ul>
                                </li>
                                <li><div class="row"><button>+</button><svg><use href="#tprof"/></svg><span>Hossz-szelvény</span></div></li>
                                <li><div class="row"><button>+</button><svg><use href="#tpv"/></svg><span>Hossz-szelvény nézet</span></div></li>
                                <li><div class="row"><button>+</button><svg><use href="#tsup"/></svg><span>Túlemelési nézet</span></div></li>
                                <li><div class="row"><button>+</button><svg><use href="#tsup"/></svg><span>Vasúti túlemelési nézet</span></div></li>
                                <li><div class="row"><button>+</button><svg><use href="#tsamp"/></svg><span>Mintavonal</span></div></li>
                                <li><div class="row"><button>+</button><svg><use href="#tsec"/></svg><span>Keresztszelvény</span></div></li>
                                <li><div class="row"><button>+</button><svg><use href="#tsv"/></svg><span>Keresztszelvénynézet</span></div></li>
                                <li><div class="row"><button>+</button><svg><use href="#tmass"/></svg><span>Földmozgatási vonal</span></div></li>
                                <li><div class="row"><button>+</button><svg><use href="#tmv"/></svg><span>Földmozgatási nézet</span></div></li>
                                <li><div class="row"><button>+</button><svg><use href="#trail"/></svg><span>Sín</span></div></li>
                                <li><div class="row"><button>+</button><svg><use href="#tturn"/></svg><span>Vasúti kitérő</span></div></li>
                                <li><div class="row"><button>+</button><svg><use href="#tcatch"/></svg><span>Vízgyűjtő</span></div></li>
                                <li><div class="row"><button>+</button><svg><use href="#tpipe"/></svg><span>Csőhálózat</span></div></li>
                            </ul>
                        </li>
                    </ul>
                    <div class="scroll"><i></i></div>
                </div>
                <div class="desc"></div>
            </div>
            <div class="vtabs">
                <button>Kereső</button>
                <button class="on">Beállítások<i class="mark"></i></button>
                <button>Földmérés</button>
                <button>Eszközkészlet</button>
            </div>
        </aside>

        <section class="center">
            <div class="work">
                <div class="canvas">
                    <svg class="drawing" viewBox="333 179 1213 753" preserveAspectRatio="xMidYMid slice">
                        <path class="dots" d="M826 231h1M837 230h1M839 242h1M841 252h1M875 289h1M858 334h1M847 350h1M883 376h1M859 470h1M864 509h1M866 531h1M900 529h1M908 529h1M959 284h1M921 285h1M999 274h1M1000 306h1M1002 305h1M1038 316h1M927 345h1M964 348h1M1004 348h1M1009 347h1M1060 345h1M1068 346h1M1061 356h1M1070 358h1M1010 395h1M1016 393h1M1023 393h1M1008 451h1M1024 463h1M1051 193h1M1053 206h1M1055 226h1M1056 239h1M874 579h1M876 594h1M919 587h1M956 584h1M990 608h1M1028 616h1M1075 568h1M1055 575h1M1051 645h1M997 656h1M935 662h1M937 669h1M971 662h1M922 672h1M923 702h1M911 717h1M904 738h1M908 755h1M963 763h1M945 775h1M919 791h1M1086 674h1M1101 689h1M1102 698h1M1096 736h1M1065 746h1M1107 747h1M1108 757h1M1126 771h1M1101 785h1M1089 793h1M1071 797h1M1140 807h1M1142 807h1M1146 822h1M1073 821h1M1101 847h1M960 803h1M974 801h1M953 831h1M941 844h1M948 846h1M945 850h1M1052 880h1M1035 883h1M978 911h1M1100 925h1M817 846h1M813 855h1M764 862h1M765 867h1M857 869h1M829 879h1M832 878h1M1004 791h1M995 759h1M1062 653h1"/>
                        <g class="mag"><path d="M852 185L875 436"/><path d="M1022 315L1034 450M1058 620L1082 735"/></g>
                        <g class="green"><path d="M1020 282L1023 310 1032 430 1040 495 1046 537M916 700l5 22M932 765l5 20M957 865l8 35 10 32M1104 815l8 35 16 42"/></g>
                        <g class="cyan">
                            <path d="M797 179L842 560 872 800 770 866 774 886 791 895 809 883 834 933"/>
                            <path d="M853 179L879 450 882 497 892 560 917 700 940 797 978 933"/>
                            <path d="M1009 179L1020 293 1029 413 1048 560 1060 627 1082 733 1103 817 1122 880 1141 933"/>
                            <path d="M1053 179L1068 320 1082 430 1098 560 1116 714 1207 661 1228 717 1133 755 1202 933"/>
                        </g>
                        <path class="wht" d="M1060 250l6 66"/>
                        <g class="yellow"><path d="M985 685V674l3-4 8-3 4 6 18 77M985 685l14 70h6M988 685l13 68M1003 678l14 66"/><path d="M1013 806l25 65M1016 806l25 66M1030 804l14 60 2 8M1033 804l13 58v8l-3 3"/></g>
                        <path class="road" d="M929 179L956 449 971 560 1000 713 1015 779 1033 843 1061 933"/>
                        <path class="axis" d="M929 179L956 449 971 560 1000 713 1015 779 1033 843 1061 933"/>
                        <path class="tang" d="M957 453L968 560 988 780M992 794L1051 932"/>
                        <g class="pink">
                            <path d="M874 457L953 450M935 801L1004 783"/>
                            <text transform="translate(933 303) rotate(-95)">0+140</text>
                            <text transform="translate(956 521) rotate(-95)">0+120</text>
                            <text transform="translate(995 738) rotate(-97)">0+100</text>
                            <text transform="translate(1052 937) rotate(-104)">0+080</text>
                            <text transform="translate(875 456) rotate(-5)">PT:&#160; 0+124.97</text>
                            <text transform="translate(936 799) rotate(-14)">Mid:&#160; 0+091</text>
                        </g>
                        <g class="red">
                            <text transform="translate(1016 804) rotate(-103)">A=50.00</text>
                            <text transform="translate(1030 806) rotate(-101)">L=40.21m</text>
                            <text transform="translate(1043 807) rotate(-101)">R=200.00m</text>
                        </g>
                        <g class="grip"><circle cx="956" cy="449" r="5"/><circle cx="1015" cy="779" r="5"/><path d="M989 778l5 13h-10zM1001 782l12-4v5z"/></g>
                        <g class="ucs"><path d="M348.500 907.500h8v9h-8zM352.500 862v50H403"/><text x="354" y="858">Y</text><text x="407" y="911">X</text></g>
                    </svg>
                    <div class="vlabel">[−][Felül][2D drótváz]</div>
                    <div class="mdi">
                        <svg viewBox="0 0 54 12"><path stroke-width="3" d="M0 8h11"/><path stroke-width="2" d="M21 4h7v7h-7zM24 1h7v7"/><path stroke-width="3" d="M41 1l9 10M50 1l-9 10"/></svg>
                    </div>
                    <div class="cube">
                        <svg viewBox="0 0 122 122"><circle cx="61" cy="61" r="54"/></svg>
                        <b class="n">É</b><b class="w">Ny</b><b class="e">K</b><b class="s">D</b>
                        <button>FELÜL</button>
                    </div>
                    <button class="vkr">VKR <svg viewBox="0 0 8 6"><path d="M0 1h8L4 5z"/></svg></button>
                    <svg class="navbar" viewBox="0 0 34 214">
                        <rect x="1" y="1" width="32" height="212" rx="4"/>
                        <path d="M6 57.500h25M6 165.500h25"/>
                        <circle cx="27" cy="6" r="3"/><circle cx="27" cy="206" r="3"/>
                        <path d="M6 20h11q11 0 11 11t-11 10Q6 41 6 31z"/><circle cx="17" cy="30" r="6"/>
                        <path d="M10 80q-8-9-2-8l4 3-2-11 3 8V61l3 10 2-10 1 10 4-8-1 11 5-3-5 10q-6 9-12 0z"/>
                        <path d="M5 91l18 15M21 91L6 106M5 95v-4h4M17 91h4v4M6 102v4h4"/><circle cx="21" cy="104" r="5"/><path d="M24 108l6 6"/>
                        <path d="M17 129l-4 6h3v16h3v-16h3zM28 142q0 6-11 6T6 141q2-5 10-5"/>
                        <path d="M5 171h6v6H5zM13 171h6v6h-6zM21 171h6v6h-6zM5 181h16v12H5z"/><path class="f" d="M10 183l7 4-7 5zM14 51h6l-3 3zM14 121h6l-3 3zM14 159h6l-3 3z"/>
                    </svg>
                </div>
                <div class="strips">
                    <div class="strip">
                        <i class="grab"></i>
                        <button aria-label="Transzparens 1"><svg><use href="#s1"/></svg></button>
                        <button aria-label="Transzparens 2"><svg><use href="#s2"/></svg></button>
                        <button aria-label="Transzparens 3"><svg><use href="#s3"/></svg></button>
                        <button aria-label="Transzparens 4"><svg><use href="#s4"/></svg></button>
                        <button aria-label="Transzparens 5"><svg><use href="#s5"/></svg></button>
                        <button aria-label="Transzparens 6"><svg><use href="#s6"/></svg></button>
                        <button aria-label="Transzparens 7"><svg><use href="#s7"/></svg></button>
                        <button aria-label="Pont száma"><svg><use href="#s8"/></svg></button>
                        <button aria-label="Pont neve"><svg><use href="#s9"/></svg></button>
                        <button aria-label="Pont kijelölése"><svg><use href="#s10"/></svg></button>
                        <button aria-label="Pont keresése"><svg><use href="#s11"/></svg></button>
                        <button aria-label="Oldallövés"><svg><use href="#s12"/></svg></button>
                        <button aria-label="Szelvény eltolás"><svg><use href="#s13"/></svg></button>
                        <hr>
                        <button aria-label="Szűrő"><svg><use href="#s14"/></svg></button>
                        <hr>
                        <button aria-label="Profil állomás"><svg><use href="#s15"/></svg></button>
                        <button aria-label="Profil felület"><svg><use href="#s16"/></svg></button>
                        <button aria-label="Profil pont"><svg><use href="#s17"/></svg></button>
                        <hr>
                        <button aria-label="Lejtés 1"><svg><use href="#s18"/></svg></button>
                        <button aria-label="Lejtés 2"><svg><use href="#s19"/></svg></button>
                        <button aria-label="Lejtés 3"><svg><use href="#s20"/></svg></button>
                        <button aria-label="Lejtés 4"><svg><use href="#s21"/></svg></button>
                        <button aria-label="Sugár"><svg><use href="#s22"/></svg></button>
                        <button aria-label="Hossz"><svg><use href="#s23"/></svg></button>
                        <button aria-label="Ív számítás"><svg><use href="#s24"/></svg></button>
                    </div>
                    <div class="strip">
                        <i class="grab"></i>
                        <button aria-label="Szűrő kijelölés"><svg><use href="#s14"/></svg></button>
                        <button aria-label="Szűrő rajz"><svg><use href="#s25"/></svg></button>
                        <button aria-label="Szűrő szám"><svg><use href="#s26"/></svg></button>
                    </div>
                </div>
            </div>
            <div class="cmd">
                <div class="cmdside">
                    <i class="grab"></i>
                    <button aria-label="Bezárás"><svg viewBox="0 0 16 16"><path stroke="#dcdcdc" stroke-width="2" d="M4 4l8 8M12 4l-8 8"/></svg></button>
                    <button aria-label="Testreszabás"><svg><use href="#wrench"/></svg></button>
                </div>
                <div class="cmdmain">
                    <div class="log"><p>Parancs: EditAlignmentStyle</p><p>Parancs:</p><p>Parancs: EditAlignmentProperties</p></div>
                    <label class="prompt"><svg viewBox="0 0 28 16"><path fill="#fff" stroke="#666" d="M.500 2.500h16v12H.500z"/><path fill="#666" d="M0 2h17v3H0z"/><path fill="none" stroke="#444" d="M3 7l3 2-3 3M8 12h4"/><path fill="#666" d="M19 6h8l-4 5z"/></svg>
                        <input type="text" placeholder="Írjon be egy parancsot" aria-label="Parancs">
                    </label>
                </div>
            </div>
        </section>

        <aside class="props">
            <div class="vtabs">
                <button class="on">Terv</button>
                <button>Display</button>
                <button>Extended Data</button>
                <button>Objektumosztály</button>
                <button>Megjelenítés</button>
            </div>
            <div class="panel">
                <h2>TULAJDONSÁGOK</h2>
                <div class="picker">
                    <label class="combo"><select aria-label="Objektumtípus"><option>Nyomvonal</option></select></label>
                    <button aria-label="Hozzáadás"><svg viewBox="0 0 16 16"><path fill="#6cb8f5" d="M0 2h7v9H0zM5 6h9v9H5z"/><path stroke="#4fcf6a" stroke-width="2" d="M12 0v8M8 4h8"/></svg></button>
                    <button aria-label="Kijelölés"><svg viewBox="0 0 16 16"><path fill="#4c8a68" stroke="#6fd08f" stroke-dasharray="2 1" d="M.500 1.500h12v10H.500z"/><path fill="#fff" d="M9 5v10l2-2 2 3 1-1-2-3h3z"/></svg></button>
                    <button aria-label="Gyors kijelölés"><svg viewBox="0 0 16 16"><path fill="#fff" d="M0 4v10l2-2 3 3 1-1-2-3h3zM7 7h9v9H7z"/><path fill="#fcb357" d="M9 0L4 5h3l-1 4 5-5H8z"/><path stroke="#1793d6" d="M9 9.500h6M9 11.500h6M9 13.500h6"/></svg></button>
                </div>
                <div class="group">
                    <button class="cat">Információ</button>
                    <table>
                        <tr><th>Stílus</th><td>Cadjogsi nyomvonal</td></tr>
                        <tr><th>Név</th><td>Tengely</td></tr>
                        <tr><th>Leírás</th><td><svg viewBox="0 0 14 12"><path fill="#f2f2f2" d="M0 0h14v12H0z"/><path fill="#9a9a9a" d="M0 0h14v3H0z"/><path stroke="#555" d="M2 5.500h4M8 5.500h4M2 7.500h4M8 7.500h4M2 9.500h4M8 9.500h4"/></svg></td></tr>
                        <tr><th>Eszköztippek megj...</th><td>Igen</td></tr>
                    </table>
                </div>
                <div class="group">
                    <button class="cat">Általános</button>
                    <table>
                        <tr><th>True Color</th><td><i class="swatch"></i>Fólia</td></tr>
                        <tr><th>Layer</th><td><i class="layer"></i>C-ROAD</td></tr>
                        <tr><th>Linetype</th><td><i class="line"></i>Fólia</td></tr>
                        <tr><th>Linetype scale</th><td>0.200</td></tr>
                        <tr><th>Plot style</th><td class="dim">Szín</td></tr>
                        <tr><th>Lineweight</th><td><i class="line thick"></i>0.30 mm</td></tr>
                        <tr><th>Hyperlink</th><td></td></tr>
                    </table>
                </div>
                <div class="group">
                    <button class="cat">Adat</button>
                    <table>
                        <tr><th>Hossz</th><td class="dim">183.154m</td></tr>
                        <tr><th>Kritérium alapú ter...</th><td>Hamis</td></tr>
                        <tr><th>Tervezésikritérium-...</th><td>Hamis</td></tr>
                        <tr><th>Tervezési kritérium...</th><td>Hamis</td></tr>
                    </table>
                </div>
                <div class="group">
                    <button class="cat">Geometria</button>
                    <table>
                        <tr><th>Referenciapont X</th><td class="dim">517510.702</td></tr>
                        <tr><th>Referenciapont Y</th><td class="dim">280711.220</td></tr>
                        <tr><th>Referenciaszelvény</th><td class="dim">0+000.00m</td></tr>
                        <tr><th>Kezdő szelvény</th><td class="dim">0+000.00m</td></tr>
                        <tr><th>Zárószelvény</th><td class="dim">0+183.15m</td></tr>
                    </table>
                </div>
            </div>
        </aside>
    </main>

    <footer>
        <nav class="docs layouts">
            <button aria-label="Menü"><svg><use href="#ham"/></svg></button>
            <a href="#" class="on">Modell</a>
            <a href="#">Layout1</a>
            <i class="slash"></i>
            <a href="#">Layout2</a>
            <i class="slash"></i>
            <button aria-label="Új elrendezés"><svg class="add"><use href="#plus"/></svg></button>
            <i class="slash"></i>
        </nav>
        <div class="status">
            <div class="seg coords">517413.477, 280842.030, 0.000</div>
            <div class="seg"><button class="txt">MODELL</button></div>
            <div class="seg"><button aria-label="Rács"><svg><use href="#b-grid"/></svg></button><button aria-label="Raszter"><svg><use href="#b-snap"/></svg></button><button class="dd" aria-label="Raszter menü"><svg><use href="#car"/></svg></button></div>
            <div class="seg"><button aria-label="Orto"><svg><use href="#b-ortho"/></svg></button><button aria-label="Poláris"><svg><use href="#b-polar"/></svg></button><button class="dd" aria-label="Poláris menü"><svg><use href="#car"/></svg></button><button aria-label="Izometrikus"><svg><use href="#b-iso"/></svg></button><button class="dd" aria-label="Izometrikus menü"><svg><use href="#car"/></svg></button><button class="on" aria-label="Követés"><svg><use href="#b-track"/></svg></button><button aria-label="Tárgyraszter"><svg><use href="#b-osnap"/></svg></button><button class="dd" aria-label="Tárgyraszter menü"><svg><use href="#car"/></svg></button><button class="on" aria-label="Vonalvastagság"><svg><use href="#b-lw"/></svg></button></div>
            <div class="seg"><button class="on" aria-label="Felirat láthatóság"><svg><use href="#b-ann2"/></svg></button><button aria-label="Automatikus lépték"><svg><use href="#b-ann3"/></svg></button><button aria-label="Felirat lépték"><svg><use href="#b-ann"/></svg></button><button class="txt">1:250</button><button class="dd" aria-label="Lépték menü"><svg><use href="#car"/></svg></button></div>
            <div class="seg"><button aria-label="Munkaterület"><svg><use href="#gear"/></svg></button><button class="dd" aria-label="Munkaterület menü"><svg><use href="#car"/></svg></button></div>
            <div class="seg"><button aria-label="Figyelő"><svg><use href="#plus"/></svg></button></div>
            <div class="seg"><button aria-label="Egységek"><svg><use href="#b-shape"/></svg></button></div>
            <div class="seg"><button aria-label="Magasság"><svg><use href="#b-layer"/></svg></button><button class="txt">3.500</button></div>
            <div class="seg"><button aria-label="Kijelölés"><svg><use href="#b-sel"/></svg></button><button class="dd" aria-label="Kijelölés menü"><svg><use href="#car"/></svg></button><button class="on" aria-label="Felirat"><svg><use href="#b-tag"/></svg></button></div>
            <div class="seg"><button aria-label="Elkülönítés"><svg><use href="#b-iso2"/></svg></button></div>
            <div class="seg"><button aria-label="Teljes képernyő"><svg><use href="#b-full"/></svg></button></div>
            <div class="seg"><button aria-label="Testreszabás"><svg><use href="#ham"/></svg></button></div>
        </div>
    </footer>
</body>

</html>
```

FILE: styles.css
```css
* {
    box-sizing: border-box;
}

body {
    margin: 0;
    height: 100vh;
    display: flex;
    flex-direction: column;
    overflow: hidden;
    background-color: #3b4453;
    color: #e6e6e6;
    font: 12px/16px "Open Sans", "Noto Sans", sans-serif;
    white-space: nowrap;
}

button, select, input {
    margin: 0;
    padding: 0;
    border: 0;
    background: none;
    color: inherit;
    font: inherit;
}

select {
    appearance: none;
}

a {
    color: inherit;
    text-decoration: none;
}

h2, h3, p, ul {
    margin: 0;
    padding: 0;
    font-weight: normal;
    font-size: 12px;
}

svg {
    display: block;
    width: 16px;
    height: 16px;
    flex: none;
}

.lib {
    display: none;
}

/* title bar */

.titlebar {
    display: flex;
    height: 22px;
    align-items: center;
    background-color: #222933;
}

.quick, .account, .window {
    display: flex;
    align-items: center;
    gap: 8px;
}

.quick {
    padding-left: 10px;
}

.car {
    width: 8px;
    height: 8px;
}

.quick .car, .account .car {
    margin: 0 1px 0 -3px;
}

.car.side {
    transform: rotate(-90deg);
}

.logo {
    width: 24px;
    height: 22px;
    background-color: #b5127f;
    border-left: 5px solid #d957b0;
    color: #fff;
    font-weight: bold;
    font-size: 13px;
}

.workspace {
    display: flex;
    align-items: center;
    gap: 3px;
    width: 178px;
    height: 21px;
    padding-left: 3px;
    margin-left: -6px;
    background-color: #3b4453;
}

.workspace select {
    flex: 1;
}

.workspace::after, .combo::after, .cat::after {
    content: "";
    border: 4px solid transparent;
    border-top-color: #dcdcdc;
    border-bottom: 0;
}

.workspace::after {
    margin-right: 2px;
}

.more {
    border-top: 1px solid #dcdcdc;
    margin-left: -2px;
}

.quick .more .car {
    margin: 0;
}

.share, .user, .trial {
    display: flex;
    align-items: center;
    gap: 5px;
}

.share {
    color: #7cc3fa;
    margin-left: 4px;
}

.doctitle {
    margin: 0 auto;
    display: flex;
    gap: 8px;
}

.account input {
    width: 178px;
    height: 20px;
    padding-left: 2px;
    background-color: #465060;
}

.account input::placeholder {
    color: #aeb3bb;
    font-style: italic;
    opacity: 1;
}

.user {
    width: 88px;
}

.trial {
    height: 24px;
    padding: 0 5px;
    background-color: #5f60ff;
    margin-top: 1px;
}

.sep {
    width: 1px;
    height: 18px;
    background-color: #4b535f;
}

.help {
    width: 16px;
    height: 16px;
    border-radius: 50%;
    background-color: #dcdcdc;
    color: #333;
    font-weight: bold;
    line-height: 16px;
}

.window {
    gap: 37px;
    margin: 0 16px 0 34px;
}

.window svg {
    width: 10px;
    height: 10px;
    fill: none;
    stroke: #e6e6e6;
}

/* ribbon */

.tabs {
    display: flex;
    height: 28px;
    padding: 7px 0 0 8px;
    gap: 16px;
    background-color: #222933;
    border-bottom: 1px solid #1691cc;
    line-height: 20px;
    color: #b4b7bc;
}

.tabs .on {
    padding: 0 8px;
    margin-left: -8px;
    background-color: #0696d7;
    color: #fff;
}

.collapse svg {
    width: 28px;
    height: 10px;
}

.ribbon {
    display: flex;
    height: 98px;
    border-bottom: 1px solid #1691cc;
}

.rpanel {
    display: flex;
    flex-direction: column;
    border-right: 1px solid #222933;
}

.p1 {
    width: 229px;
}

.p2 {
    width: 235px;
}

.p3 {
    width: 352px;
    padding-left: 4px;
}

.p4 {
    width: 189px;
}

.p5 {
    border-right: 0;
    width: 320px;
}

.tools {
    display: flex;
    flex: 1;
}

.rpanel h3 {
    height: 19px;
    display: flex;
    justify-content: center;
    align-items: center;
    gap: 4px;
}

.rpanel h3 svg {
    width: 10px;
    height: 10px;
}

.big {
    position: relative;
    display: flex;
    flex: none;
    flex-direction: column;
    align-items: center;
    padding-top: 7px;
    line-height: 15px;
}

.big svg {
    width: 32px;
    height: 32px;
    margin-bottom: 4px;
    overflow: visible;
}

.drop::after, .below::after {
    content: "";
    position: absolute;
    right: 0;
    top: 57px;
    border: 3px solid transparent;
    border-top-color: #dcdcdc;
    border-bottom: 0;
}

.below::after {
    right: 50%;
    top: 61px;
}

.w46 {
    width: 46px;
}

.w68 {
    width: 68px;
}

.w76 {
    width: 76px;
}

.w90 {
    width: 90px;
}

.w120 {
    width: 120px;
}

.stack {
    padding: 4px 0 0 7px;
}

.stack button {
    display: flex;
    align-items: center;
    gap: 4px;
    height: 24px;
}

.p5 .stack {
    width: 154px;
}

/* drawing and layout tabs */

.docs {
    display: flex;
    height: 27px;
    padding-top: 3px;
    align-items: center;
    background-color: #222933;
}

.docs a, .docs button {
    padding: 0 7px;
}

.docs > button:first-child {
    padding: 0 9px 0 11px;
}

.docs .add {
    width: 14px;
    height: 14px;
}

.slash {
    width: 1px;
    height: 17px;
    margin: 0 4px;
    background-color: #59616d;
    transform: skewX(-20deg);
}

.docs .on {
    position: relative;
    z-index: 0;
    height: 24px;
    line-height: 24px;
    padding: 0 12px 0 15px;
    color: #fff;
    font-weight: bold;
}

.docs .on::before {
    content: "";
    position: absolute;
    z-index: -1;
    inset: 0 4px;
    background-color: #3b4453;
    transform: skewX(-20deg);
}

.docs .on span {
    margin-left: 3px;
    color: #b4b7bc;
}

/* main area */

main {
    display: flex;
    flex: 1;
    min-height: 0;
}

.toolspace, .props {
    display: flex;
    padding-top: 6px;
}

.panel h2 {
    display: flex;
    height: 20px;
    gap: 6px;
    line-height: 18px;
    background-color: #2e3440;
    border-radius: 0 6px 0 0;
}

.panel h2::before {
    content: "";
    width: 4px;
    height: 9px;
    margin-top: 7px;
    background: repeating-linear-gradient(#9a9da3 0 1px, #2e3440 1px 2px);
}

.toolspace .panel {
    width: 308px;
    display: flex;
    flex-direction: column;
}

.ptools {
    display: flex;
    justify-content: flex-end;
    gap: 11px;
    padding: 7px 6px;
}

.view {
    position: relative;
}

.view select {
    display: block;
    width: 100%;
    height: 21px;
    padding-left: 5px;
    background-color: #fff;
    color: #111;
}

.view::after {
    content: "";
    position: absolute;
    right: 6px;
    top: 5px;
    width: 7px;
    height: 7px;
    border: solid #444;
    border-width: 0 1px 1px 0;
    transform: rotate(45deg);
}

.mark {
    position: absolute;
    z-index: 3;
    border: 5px solid #ed1c24;
}

.view .mark {
    left: -2px;
    top: -5px;
    width: 64px;
    height: 29px;
}

.tree {
    position: relative;
    flex: 1;
    min-height: 0;
    margin-top: 2px;
    padding-top: 2px;
    border: 1px solid #8a8f98;
    border-left: 0;
    overflow: hidden;
    background-color: #fff;
    color: #000;
}

.tree ul {
    list-style: none;
}

.tree ul ul {
    padding-left: 19px;
}

.tree li {
    position: relative;
}

.tree li::before {
    content: "";
    position: absolute;
    left: 9px;
    top: 0;
    bottom: 0;
    border-left: 1px dotted #777;
}

.tree li:last-child::before {
    bottom: auto;
    height: 10px;
}

.row {
    position: relative;
    display: flex;
    align-items: center;
    height: 20px;
    padding-left: 5px;
}

.row::before {
    content: "";
    position: absolute;
    left: 10px;
    top: 10px;
    width: 9px;
    border-top: 1px dotted #777;
}

.row button {
    position: relative;
    width: 9px;
    height: 9px;
    border: 1px solid #919191;
    background-color: #fff;
    color: #1f4f9c;
    font-size: 10px;
    font-weight: bold;
    line-height: 7px;
}

.row svg {
    margin: 0 7px;
}

.leaf svg {
    margin-left: 16px;
}

.row .flag {
    width: 6px;
    height: 6px;
    margin: -12px 17px 0 -4px;
}

.sel {
    flex: 1;
    margin: 0 17px 0 -4px;
    padding-left: 4px;
    line-height: 19px;
    background-color: #0078d7;
    color: #fff;
}

.row .mark {
    left: 53px;
    top: -2px;
    width: 164px;
    height: 29px;
}

.scroll {
    position: absolute;
    top: 1px;
    right: 0;
    bottom: 0;
    width: 17px;
    padding: 17px 0 0 7px;
    background-color: #f0f0f0;
}

.scroll i {
    display: block;
    width: 2px;
    height: 61%;
    background-color: #85858d;
}

.desc {
    height: 93px;
    margin: 8px 0 9px;
    border: 1px solid #9a9da3;
    border-left: 0;
}

.vtabs {
    padding-top: 22px;
    width: 20px;
}

.vtabs button {
    position: relative;
    display: block;
    width: 100%;
    height: 121px;
    writing-mode: vertical-rl;
    transform: rotate(180deg);
    background-color: #2e3440;
    border: 1px solid #222933;
    border-radius: 4px 0 0 4px;
    color: #9a9da3;
}

.props .vtabs button {
    border-radius: 0 4px 4px 0;
}

.vtabs .on {
    background-color: #3b4453;
    color: #e6e6e6;
}

.vtabs .mark {
    left: -7px;
    top: 5px;
    width: 35px;
    height: 108px;
}

.center {
    display: flex;
    flex: 1;
    min-width: 0;
    flex-direction: column;
    padding: 4px 0 5px 5px;
}

.work {
    display: flex;
    flex: 1;
    min-height: 0;
    margin-bottom: 4px;
}

.canvas {
    position: relative;
    flex: 1;
    min-width: 0;
    background-color: #222830;
}

.drawing {
    position: absolute;
    width: 100%;
    height: 100%;
    fill: none;
    shape-rendering: crispEdges;
}

.dots, .wht {
    stroke: #fff;
}

.mag {
    stroke: #f0f;
}

.green {
    stroke: #0f0;
}

.cyan {
    stroke: #0ff;
    stroke-width: 3;
}

.yellow {
    stroke: #ff0;
}

.road {
    stroke: #274b8d;
    stroke-width: 9;
}

.axis {
    stroke: #a0326e;
    stroke-width: 5;
    stroke-dasharray: 56 3 4 3;
    stroke-dashoffset: 45;
}

.tang {
    stroke: #fff;
    stroke-dasharray: 3 2;
}

.pink path {
    stroke: #ff8080;
}

.pink text, .red text {
    fill: #ff8080;
    font: 12px "Liberation Sans", sans-serif;
}

.red text {
    fill: #f00;
}

.grip {
    fill: #0ff;
    stroke: #2a8f96;
}

.ucs path {
    stroke: #fff;
}

.ucs text {
    fill: #fff;
    font: 18px "Lato", sans-serif;
}

.vlabel {
    position: absolute;
    left: 3px;
    top: 6px;
}

.mdi {
    position: absolute;
    right: 7px;
    top: 9px;
}

.mdi svg {
    width: 54px;
    height: 12px;
    fill: none;
    stroke: #fff;
}

.cube {
    position: absolute;
    right: 22px;
    top: 45px;
    width: 122px;
    height: 122px;
    color: #a3a7ac;
    font-size: 18px;
    line-height: 18px;
}

.cube svg {
    width: 122px;
    height: 122px;
    fill: none;
    stroke: #45494f;
    stroke-width: 13;
}

.cube b {
    position: absolute;
}

.cube .n {
    top: -4px;
    left: 56px;
}

.cube .s {
    bottom: -6px;
    left: 54px;
}

.cube .w {
    top: 52px;
    left: -8px;
}

.cube .e {
    top: 52px;
    right: -2px;
}

.cube button {
    position: absolute;
    left: 35px;
    top: 35px;
    width: 52px;
    height: 52px;
    background-color: #a9acb2;
    border: 1px solid #c0c2c6;
    color: #4d5561;
    font-size: 13px;
    font-weight: bold;
}

.vkr {
    position: absolute;
    right: 61px;
    top: 193px;
    display: flex;
    align-items: center;
    gap: 6px;
    width: 45px;
    height: 18px;
    padding-left: 4px;
    border: 1px solid #b0b0bc;
    border-radius: 4px;
    background-color: #8e8f9c;
    color: #454954;
    font-size: 11px;
}

.vkr svg {
    width: 8px;
    height: 6px;
    fill: #b9bac4;
}

.navbar {
    position: absolute;
    right: 3px;
    top: 235px;
    width: 34px;
    height: 214px;
    fill: none;
    stroke: #45484e;
}

.navbar rect {
    fill: #63666b;
    stroke: #303038;
}

.navbar .f {
    fill: #45484e;
    stroke: none;
}

.strips {
    width: 32px;
    padding: 1px 3px 0 4px;
}

.strip {
    display: flex;
    flex-direction: column;
    align-items: center;
    margin-bottom: 2px;
    border: 1px solid #222933;
}

.grab {
    width: 14px;
    height: 4px;
    margin: 1px 0;
    background: repeating-linear-gradient(90deg, #dcdcdc 0 1px, transparent 1px 2px);
}

.strip button {
    padding: 3px 0;
}

.strip hr {
    width: 19px;
    height: 2px;
    margin: 2px 0;
    border: 0;
    background-color: #f2f2f2;
}

/* command line */

.cmd {
    display: flex;
    height: 59px;
    border: 1px solid #222933;
    border-left: 0;
    background-color: #2e3440;
}

.cmdside {
    display: flex;
    flex-direction: column;
    align-items: center;
    justify-content: space-between;
    width: 25px;
    padding: 3px 0;
}

.cmdmain {
    flex: 1;
    display: flex;
    flex-direction: column;
    color: #111;
    font: 12px/15px "DejaVu Sans Mono", monospace;
}

.log {
    display: flex;
    flex-direction: column;
    justify-content: flex-end;
    height: 37px;
    padding-left: 2px;
    overflow: hidden;
    background-color: #c8c8c8;
    border-bottom: 1px solid #222933;
}

.prompt {
    display: flex;
    flex: 1;
    align-items: center;
    padding-left: 4px;
    gap: 4px;
    background-color: #fff;
}

.prompt svg {
    width: 28px;
}

.prompt input {
    flex: 1;
}

.prompt input::placeholder {
    color: #6f746f;
    font-style: italic;
    opacity: 1;
}

/* properties palette */

.props {
    margin-left: 4px;
}

.props .vtabs {
    width: 21px;
}

.props .panel {
    width: 311px;
}

.props h2 {
    padding-left: 6px;
    border-radius: 6px 0 0 0;
}

.picker {
    display: flex;
    align-items: center;
    gap: 8px;
    padding: 12px 0 7px 5px;
}

.combo {
    display: flex;
    align-items: center;
    width: 224px;
    height: 24px;
    padding: 0 2px 0 4px;
    border: 1px solid #2e3440;
    border-radius: 3px;
    background-color: #4d5a70;
}

.combo select {
    flex: 1;
}

.group {
    margin: 0 17px 3px 10px;
}

.cat {
    display: flex;
    align-items: center;
    justify-content: space-between;
    width: 100%;
    height: 20px;
    padding: 0 7px;
    background-color: #2e3440;
    font-weight: bold;
}

.props table {
    width: 266px;
    margin-left: 18px;
    table-layout: fixed;
    border-collapse: separate;
    border-spacing: 0;
}

.props th, .props td {
    height: 19px;
    padding: 0 0 0 5px;
    border: solid #2e3440;
    border-width: 0 1px 1px 0;
    line-height: 18px;
    text-align: left;
    font-weight: normal;
}

.props th {
    width: 122px;
    border-left-width: 1px;
    overflow: hidden;
    color: #c9ccd1;
}

.props td {
    padding-left: 2px;
}

.props td svg {
    width: 14px;
    height: 12px;
}

.props .dim {
    color: #8b919b;
}

.swatch, .layer, .line {
    display: inline-block;
    vertical-align: middle;
}

.swatch {
    width: 14px;
    height: 14px;
    margin-right: 6px;
    background-color: #fff;
}

.layer {
    width: 10px;
    height: 10px;
    margin: 0 8px 0 2px;
    border: 1px solid #000;
    background: linear-gradient(45deg, #fff 50%, #000 50%);
}

.line {
    width: 66px;
    height: 1px;
    margin-right: 4px;
    background-color: #fff;
}

.thick {
    height: 3px;
}

/* bottom bar */

footer {
    display: flex;
    justify-content: space-between;
    height: 24px;
    background-color: #222933;
}

.layouts {
    height: 24px;
    padding: 0;
}

.layouts .on {
    margin-left: 2px;
}

.status {
    display: flex;
    gap: 4px;
    padding-top: 2px;
}

.seg {
    display: flex;
    align-items: center;
    background-color: #3b4453;
}

.seg button {
    display: flex;
    align-items: center;
    justify-content: center;
    width: 24px;
    height: 100%;
}

.seg .txt {
    width: auto;
    padding: 0 3px;
}

.coords {
    padding: 0 4px 0 6px;
}

.seg .dd {
    width: 16px;
}

.dd svg {
    width: 10px;
    height: 10px;
}

.seg .on {
    background-color: #5b8ec4;
}
```
